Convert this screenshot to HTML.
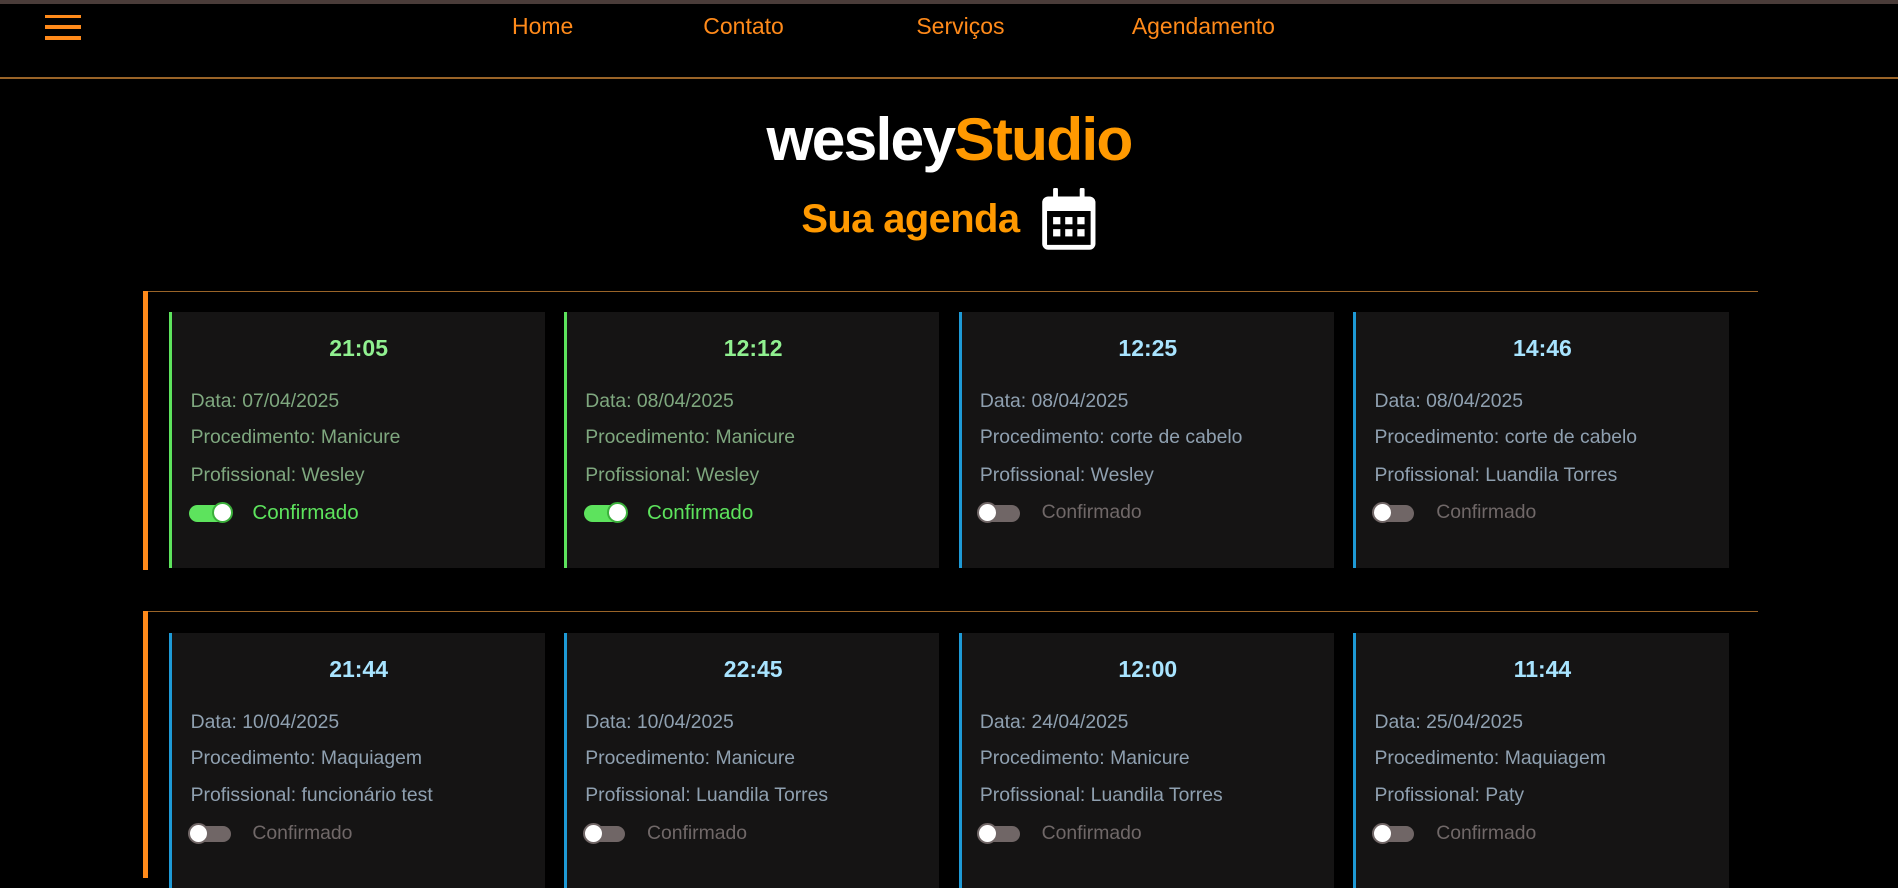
<!DOCTYPE html>
<html><head><meta charset="utf-8">
<style>
html{zoom:1.2105}
body{margin:0;width:1568px;height:717px;background:#000;overflow:hidden;font-family:"Liberation Sans",sans-serif;position:relative}
.topb{position:absolute;left:0;top:0;width:1568px;height:3px;background:#4a3c39}
.hb{position:absolute;left:37px;width:30px;height:3px;background:#ff8a1a}
.nav a{position:absolute;top:11px;font-size:19px;color:#ff8a1a;text-decoration:none}
.hline{position:absolute;left:0;top:64px;width:1568px;height:1px;background:#9a6428}
.title{position:absolute;left:0;width:1568px;text-align:center;top:86px;font-size:50px;font-weight:bold;color:#fff;letter-spacing:-1.5px}
.title span{color:#ff9900}
.sub{position:absolute;left:662px;top:163px;font-size:33px;font-weight:bold;color:#ff9900;letter-spacing:-0.5px}
.sec{position:absolute;left:118px;width:1334px;border-top:1px solid #9a6428}
.bar{position:absolute;left:118px;width:4px;background:#ff8a1a}
.card{position:absolute;width:310px;height:211px;background:#151414;border-left:3px solid #1e9ad6;box-sizing:border-box}
.card.g{border-left-color:#5de35d}
.card .t{position:absolute;left:0;right:0;top:19px;text-align:center;font-weight:bold;font-size:19px;color:#a8e4ff}
.card.g .t{color:#90f090}
.card .l{position:absolute;left:15px;font-size:16px;color:#8fa0b0}
.card.g .l{color:#7fa87f}
.tg{position:absolute;left:14px;top:159px;width:34px;height:14px;border-radius:7px;background:#706666}
.tg i{position:absolute;left:-1px;top:-2px;width:14px;height:14px;border-radius:50%;background:#fff;border:2px solid #706666}
.card.g .tg{background:#5de35d}
.card.g .tg i{left:19px;border-color:#3bb03b}
.cf{position:absolute;left:66px;top:156px;font-size:16px;color:#706868}
.card.g .cf{color:#5de35d;font-size:17px}
</style></head><body>
<div class="topb"></div>
<div class="hb" style="top:12px"></div><div class="hb" style="top:21px"></div><div class="hb" style="top:30px"></div>
<div class="nav"><a style="left:423px">Home</a><a style="left:581px">Contato</a><a style="left:757px">Serviços</a><a style="left:935px">Agendamento</a></div>
<div class="hline"></div>
<div class="title">wesley<span>Studio</span></div>
<div class="sub">Sua agenda</div>
<svg style="position:absolute;left:860px;top:155px" width="46" height="52" viewBox="0 0 46 52">
<rect x="10" y="0" width="4" height="10" rx="1" fill="#fff"/><rect x="32" y="0" width="4" height="10" rx="1" fill="#fff"/>
<rect x="1" y="7" width="44" height="44" rx="5" fill="#fff"/>
<rect x="5" y="19" width="36" height="28" fill="#000"/>
<g fill="#fff"><rect x="10" y="24" width="6" height="6"/><rect x="20" y="24" width="6" height="6"/><rect x="30" y="24" width="6" height="6"/><rect x="10" y="34" width="6" height="6"/><rect x="20" y="34" width="6" height="6"/><rect x="30" y="34" width="6" height="6"/></g>
</svg>

<div class="sec" style="top:240px"></div><div class="bar" style="top:240px;height:231px"></div>
<div class="sec" style="top:505px"></div><div class="bar" style="top:505px;height:220px"></div>

<div class="card g" style="left:140px;top:258px"><div class="t">21:05</div><div class="l" style="top:64px">Data: 07/04/2025</div><div class="l" style="top:94px">Procedimento: Manicure</div><div class="l" style="top:125px">Profissional: Wesley</div><div class="tg"><i></i></div><div class="cf">Confirmado</div></div>
<div class="card g" style="left:466px;top:258px"><div class="t">12:12</div><div class="l" style="top:64px">Data: 08/04/2025</div><div class="l" style="top:94px">Procedimento: Manicure</div><div class="l" style="top:125px">Profissional: Wesley</div><div class="tg"><i></i></div><div class="cf">Confirmado</div></div>
<div class="card" style="left:792px;top:258px"><div class="t">12:25</div><div class="l" style="top:64px">Data: 08/04/2025</div><div class="l" style="top:94px">Procedimento: corte de cabelo</div><div class="l" style="top:125px">Profissional: Wesley</div><div class="tg"><i></i></div><div class="cf">Confirmado</div></div>
<div class="card" style="left:1118px;top:258px"><div class="t">14:46</div><div class="l" style="top:64px">Data: 08/04/2025</div><div class="l" style="top:94px">Procedimento: corte de cabelo</div><div class="l" style="top:125px">Profissional: Luandila Torres</div><div class="tg"><i></i></div><div class="cf">Confirmado</div></div>

<div class="card" style="left:140px;top:523px"><div class="t">21:44</div><div class="l" style="top:64px">Data: 10/04/2025</div><div class="l" style="top:94px">Procedimento: Maquiagem</div><div class="l" style="top:125px">Profissional: funcionário test</div><div class="tg"><i></i></div><div class="cf">Confirmado</div></div>
<div class="card" style="left:466px;top:523px"><div class="t">22:45</div><div class="l" style="top:64px">Data: 10/04/2025</div><div class="l" style="top:94px">Procedimento: Manicure</div><div class="l" style="top:125px">Profissional: Luandila Torres</div><div class="tg"><i></i></div><div class="cf">Confirmado</div></div>
<div class="card" style="left:792px;top:523px"><div class="t">12:00</div><div class="l" style="top:64px">Data: 24/04/2025</div><div class="l" style="top:94px">Procedimento: Manicure</div><div class="l" style="top:125px">Profissional: Luandila Torres</div><div class="tg"><i></i></div><div class="cf">Confirmado</div></div>
<div class="card" style="left:1118px;top:523px"><div class="t">11:44</div><div class="l" style="top:64px">Data: 25/04/2025</div><div class="l" style="top:94px">Procedimento: Maquiagem</div><div class="l" style="top:125px">Profissional: Paty</div><div class="tg"><i></i></div><div class="cf">Confirmado</div></div>
</body></html>
